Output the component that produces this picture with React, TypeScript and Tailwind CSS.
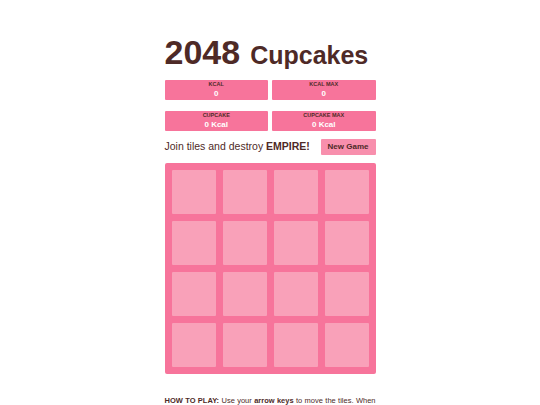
import React from 'react';

const scores = [
  { label: 'KCAL', value: '0' },
  { label: 'KCAL MAX', value: '0' },
  { label: 'CUPCAKE', value: '0 Kcal' },
  { label: 'CUPCAKE MAX', value: '0 Kcal' },
];

export default function App() {
  const cells = Array.from({ length: 16 });

  return (
    <div className="min-h-screen bg-white text-[#4e2a27]" style={{ fontFamily: '"Liberation Sans", Arial, sans-serif' }}>
      <div className="w-[211px] mx-auto pt-[34px]">
        {/* Title */}
        <div className="flex items-baseline gap-[10px] leading-none h-[36px]">
          <span className="text-[34px] font-bold leading-[36px]">2048</span>
          <span className="text-[25px] font-bold">Cupcakes</span>
        </div>

        {/* Scores */}
        <div className="grid grid-cols-2 gap-x-[4px] gap-y-[11px] mt-[10px]">
          {scores.map(s => (
            <div key={s.label} className="h-[20px] bg-[#f7749b] rounded-[1px] flex flex-col items-center justify-center leading-none">
              <span className="text-[5.5px] font-bold">{s.label}</span>
              <span className="text-[8px] font-bold text-white mt-[2px]">{s.value}</span>
            </div>
          ))}
        </div>

        {/* Intro row */}
        <div className="flex items-center justify-between mt-[8px] h-[16px]">
          <p className="text-[10.5px] whitespace-nowrap">
            Join tiles and destroy <strong>EMPIRE!</strong>
          </p>
          <button className="h-[16px] w-[55px] bg-[#f88fad] rounded-[1px] text-[8px] font-bold text-[#4e2a27]">
            New Game
          </button>
        </div>

        {/* Board */}
        <div className="mt-[8px] bg-[#f7749b] rounded-[2px] p-[7px] grid grid-cols-4 gap-[7px]">
          {cells.map((_, i) => (
            <div key={i} className="h-[44px] bg-[#f9a1b9] rounded-[1px]" />
          ))}
        </div>

        <p className="mt-[21px] text-[7.5px] leading-[12px] text-justify">
          <strong>HOW TO PLAY:</strong> Use your <strong>arrow keys</strong> to move the tiles. When two tiles with the same cupcake touch, they merge into one!
        </p>
      </div>
    </div>
  );
}
